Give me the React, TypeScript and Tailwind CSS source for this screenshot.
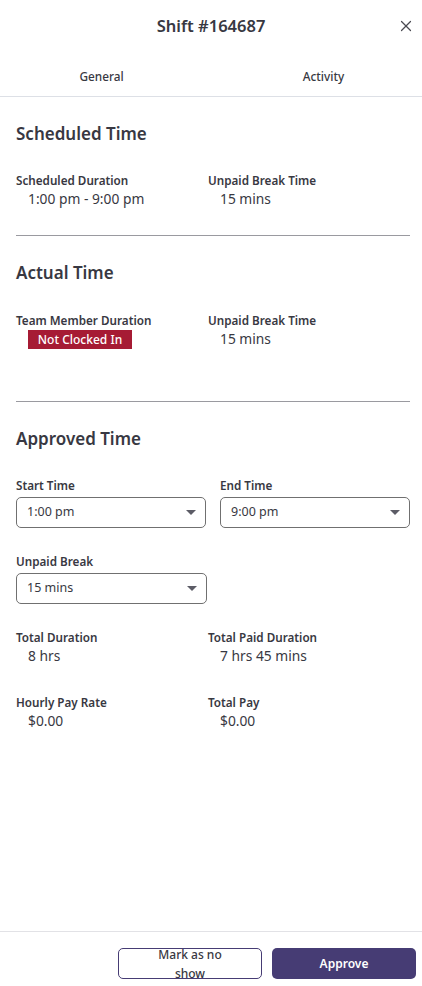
import { X } from "lucide-react";

const font = { fontFamily: '"Noto Sans", "Open Sans", sans-serif' };

interface FieldProps {
  label: string;
  value: React.ReactNode;
}

const Field = ({ label, value }: FieldProps) => (
  <div className="flex flex-col">
    <span className="text-[11.7px] font-semibold leading-[14px] text-[#383842]">{label}</span>
    <div className="pl-3 pt-[3px] text-[13.8px] leading-[18px] text-[#383842]">{value}</div>
  </div>
);

const Caret = () => (
  <svg width="10" height="5" viewBox="0 0 10 5" className="fill-[#5c5c66]">
    <path d="M0 0h10L5 5z" />
  </svg>
);

interface SelectProps {
  label: string;
  value: string;
}

const SelectBox = ({ label, value }: SelectProps) => (
  <div className="flex flex-col">
    <span className="text-[11.7px] font-semibold leading-[14px] text-[#383842]">{label}</span>
    <div className="mt-[5px] flex h-[31px] items-center justify-between rounded-[5px] border border-[#707070] pl-[10px] pr-[9px]">
      <span className="text-[12.5px] text-[#383842]">{value}</span>
      <Caret />
    </div>
  </div>
);

const SectionTitle = ({ children }: { children: React.ReactNode }) => (
  <h2 className="text-[17px] font-semibold leading-[22px] text-[#383842]">{children}</h2>
);

export default function App() {
  return (
    <div className="flex h-[986px] w-[422px] flex-col bg-white" style={font}>
      <header className="relative flex h-[52px] items-center justify-center">
        <h1 className="text-[16.5px] font-semibold text-[#383842]">Shift #164687</h1>
        <button className="absolute right-[7px] top-[17px] text-[#4a4a52]">
          <X size={18} strokeWidth={1.6} />
        </button>
      </header>

      <nav className="grid h-[45px] grid-cols-2 border-b border-[#dde0e6] pt-[5px]">
        <button className="pr-[8px] text-[11.8px] font-medium text-[#383842]">General</button>
        <button className="pl-[14px] text-[11.8px] font-medium text-[#383842]">Activity</button>
      </nav>

      <main className="flex-1 pl-4 pr-3">
        <section className="pt-[26px]">
          <SectionTitle>Scheduled Time</SectionTitle>
          <div className="mt-[28px] grid grid-cols-[192px_1fr] pb-[27px]">
            <Field label="Scheduled Duration" value="1:00 pm - 9:00 pm" />
            <Field label="Unpaid Break Time" value="15 mins" />
          </div>
          <hr className="border-t border-[#9a9aa0]" />
        </section>

        <section className="pt-[26px]">
          <SectionTitle>Actual Time</SectionTitle>
          <div className="mt-[29px] grid grid-cols-[192px_1fr] pb-[52px]">
            <Field
              label="Team Member Duration"
              value={
                <span className="block h-[19px] w-[104px] bg-[#a61b34] text-center text-[12px] font-medium leading-[19px] text-white">
                  Not Clocked In
                </span>
              }
            />
            <Field label="Unpaid Break Time" value="15 mins" />
          </div>
          <hr className="border-t border-[#9a9aa0]" />
        </section>

        <section className="pt-[26px]">
          <SectionTitle>Approved Time</SectionTitle>
          <div className="mt-[28px] grid grid-cols-2 gap-[14px]">
            <SelectBox label="Start Time" value="1:00 pm" />
            <SelectBox label="End Time" value="9:00 pm" />
          </div>
          <div className="mt-[26px] grid grid-cols-[191px_1fr]">
            <SelectBox label="Unpaid Break" value="15 mins" />
          </div>
          <div className="mt-[26px] grid grid-cols-[192px_1fr]">
            <Field label="Total Duration" value="8 hrs" />
            <Field label="Total Paid Duration" value="7 hrs 45 mins" />
          </div>
          <div className="mt-[30px] grid grid-cols-[192px_1fr]">
            <Field label="Hourly Pay Rate" value="$0.00" />
            <Field label="Total Pay" value="$0.00" />
          </div>
        </section>
      </main>

      <footer className="flex h-[55px] items-start justify-end gap-[10px] border-t border-[#e2e2e6] px-[6px] pt-[16px]">
        <button className="flex h-[31px] w-[144px] items-center justify-center rounded-[5px] border border-[#463c74] px-[38px]">
          <span className="text-[12px] font-medium leading-[19px] text-[#383842]">Mark as no show</span>
        </button>
        <button className="h-[31px] w-[144px] rounded-[5px] bg-[#463c74] text-[12px] font-semibold text-white">
          Approve
        </button>
      </footer>
    </div>
  );
}
